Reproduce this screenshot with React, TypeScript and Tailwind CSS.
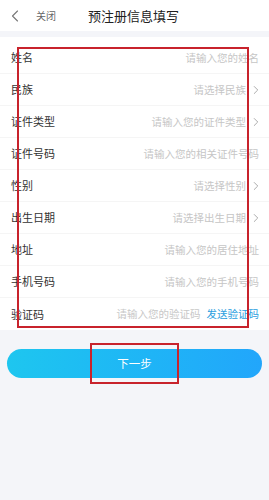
import React from 'react';
import { ChevronLeft, ChevronRight } from 'lucide-react';

const rows = [
  { label: '姓名', placeholder: '请输入您的姓名', arrow: false },
  { label: '民族', placeholder: '请选择民族', arrow: true },
  { label: '证件类型', placeholder: '请输入您的证件类型', arrow: true },
  { label: '证件号码', placeholder: '请输入您的相关证件号码', arrow: false },
  { label: '性别', placeholder: '请选择性别', arrow: true },
  { label: '出生日期', placeholder: '请选择出生日期', arrow: true },
  { label: '地址', placeholder: '请输入您的居住地址', arrow: false },
  { label: '手机号码', placeholder: '请输入您的手机号码', arrow: false },
];

export default function App() {
  return (
    <div
      className="relative w-[269px] h-[500px] bg-[#f4f5f9] overflow-hidden"
      style={{ fontFamily: '"Noto Sans CJK SC", "Noto Sans", sans-serif' }}
    >
      {/* Header */}
      <div className="h-[31px] bg-white flex items-center">
        <ChevronLeft className="w-[20px] h-[20px] ml-[5px] text-[#777]" strokeWidth={1.3} />
        <span className="ml-[11px] text-[10px] text-[#666]">关闭</span>
        <span className="ml-[32px] text-[13px] text-[#222]">预注册信息填写</span>
      </div>

      {/* Form */}
      <div className="mt-[6px] bg-white pt-[5px]">
        {rows.map((r) => (
          <div key={r.label} className="h-8 flex items-center pl-[11px] pr-[10px] border-b border-[#f5f5f5]">
            <span className="text-[11px] text-[#333]">{r.label}</span>
            <span className="ml-auto text-[10.5px] text-[#c6c6c6]">{r.placeholder}</span>
            {r.arrow && <ChevronRight className="w-[14px] h-[14px] ml-[3px] -mr-[4px] text-[#999]" strokeWidth={1.4} />}
          </div>
        ))}
        <div className="h-8 flex items-center pl-[11px] pr-[10px]">
          <span className="text-[11px] text-[#333]">验证码</span>
          <span className="ml-auto text-[10.5px] text-[#c8c8c8]">请输入您的验证码</span>
          <span className="ml-[6px] text-[10.5px] text-[#2a9ee0]">发送验证码</span>
        </div>
      </div>

      {/* Button */}
      <div className="px-[7px] pt-[19px]">
        <div className="h-[29px] rounded-full bg-gradient-to-r from-[#1ec6ef] to-[#22a6fb] flex items-center justify-center">
          <span className="text-[11.5px] text-white">下一步</span>
        </div>
      </div>

      {/* Annotation boxes */}
      <div className="absolute left-[17px] top-[47px] w-[232px] h-[281px] border-2 border-[#c8232c]" />
      <div className="absolute left-[90px] top-[343px] w-[89px] h-[41px] border-2 border-[#c8232c]" />
    </div>
  );
}
